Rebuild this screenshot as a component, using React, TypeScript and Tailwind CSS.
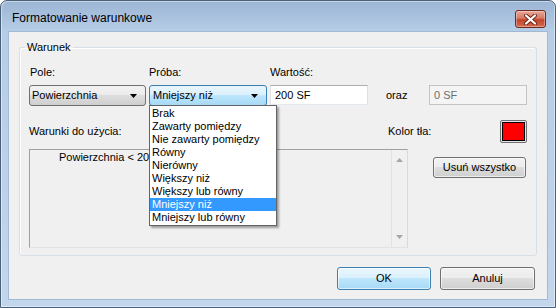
import React from "react";

const Arrow = ({ color = "#000" }: { color?: string }) => (
  <svg width="7" height="4" viewBox="0 0 7 4" className="block">
    <path d="M0 0H7L3.5 4Z" fill={color} />
  </svg>
);

const UpArrow = ({ color = "#a6a6a6" }: { color?: string }) => (
  <svg width="7" height="4" viewBox="0 0 7 4" className="block">
    <path d="M0 4H7L3.5 0Z" fill={color} />
  </svg>
);

export default function App() {
  const items = [
    "Brak",
    "Zawarty pomiędzy",
    "Nie zawarty pomiędzy",
    "Równy",
    "Nierówny",
    "Większy niż",
    "Większy lub równy",
    "Mniejszy niż",
    "Mniejszy lub równy",
  ];
  return (
    <div className="h-[308px] w-[556px] bg-white font-['Liberation_Sans',Arial,sans-serif] text-[11px] text-black">
      <div className="flex h-full flex-col rounded-t-[7px] border border-[#4b6079] bg-[linear-gradient(to_bottom,#9bb5d4,#b6cde7_30px,#c2d6ec)] shadow-[inset_1px_1px_0_rgba(255,255,255,0.45),inset_-1px_-1px_0_rgba(255,255,255,0.45)]">
        {/* Title bar */}
        <div className="flex h-[30px] items-start">
          <span className="ml-[11px] mt-[10px] text-[12px] leading-[15px]">Formatowanie warunkowe</span>
          <div className="ml-auto mr-[9px] mt-[9px] flex h-[18px] w-[31px] items-center justify-center rounded-[3px] border border-[#6e2a1f] bg-[linear-gradient(to_bottom,#e9a797,#d57a63_45%,#c0432b_55%,#d7694e)] shadow-[inset_0_0_0_1px_rgba(255,255,255,0.35)]">
            <svg width="13" height="11" viewBox="0 0 13 11" className="block">
              <path d="M2 1.5L11 9.5M11 1.5L2 9.5" stroke="#6b2418" strokeWidth="4" strokeLinecap="round" />
              <path d="M2 1.5L11 9.5M11 1.5L2 9.5" stroke="#ffffff" strokeWidth="2.2" strokeLinecap="round" />
            </svg>
          </div>
        </div>

        {/* Client area */}
        <div className="mx-[7px] mb-[7px] flex flex-1 flex-col border border-[#a3b9d3] bg-[#f0f0f0]">
          <fieldset className="mx-[10px] mt-[9px] rounded-[3px] border border-[#d5dfe5] pb-[7px] pl-[9px] pr-[9px] pt-[12px] shadow-[inset_1px_1px_0_#ffffff]">
            <legend className="-ml-[4px] px-[2px] leading-[13px]">Warunek</legend>

            {/* Row: labels + controls */}
            <div className="flex items-start">
              <div className="flex w-[117px] flex-col">
                <span className="h-[13px] pl-[1px] leading-[13px]">Pole:</span>
                <div className="mt-[6px] flex h-[21px] items-center rounded-[3px] border border-[#707070] bg-[linear-gradient(to_bottom,#f2f2f2,#ebebeb_50%,#dddddd_50%,#cfcfcf)] pl-[2px] pr-[8px]">
                  <span className="leading-[13px]">Powierzchnia</span>
                  <span className="ml-auto">
                    <Arrow />
                  </span>
                </div>
              </div>

              <div className="relative ml-[3px] flex w-[118px] flex-col">
                <span className="h-[13px] leading-[13px]">Próba:</span>
                <div className="mt-[6px] flex h-[21px] items-center rounded-[3px] border border-[#3c7fb1] bg-[linear-gradient(to_bottom,#eaf6fd,#d9f0fc_50%,#bee6fd_50%,#a7d9f5)] pl-[3px] pr-[8px]">
                  <span className="leading-[13px]">Mniejszy niż</span>
                  <span className="ml-auto">
                    <Arrow />
                  </span>
                </div>
                <div className="absolute left-0 top-[39px] z-10 w-[128px] border border-[#646464] bg-white py-[1px] shadow-[2px_2px_2px_rgba(0,0,0,0.35)]">
                  {items.map((it) => (
                    <div
                      key={it}
                      className={
                        it === "Mniejszy niż"
                          ? "h-[13px] whitespace-nowrap bg-[#3399ff] pl-[2px] leading-[13px] text-white"
                          : "h-[13px] whitespace-nowrap pl-[2px] leading-[13px]"
                      }
                    >
                      {it}
                    </div>
                  ))}
                </div>
              </div>

              <div className="ml-[3px] flex w-[98px] flex-col">
                <span className="h-[13px] leading-[13px]">Wartość:</span>
                <div className="mt-[6px] flex h-[20px] items-center border border-[#abadb3] border-b-[#e3e9ef] border-l-[#e2e3ea] border-r-[#dbdfe6] bg-white pl-[4px]">
                  <span className="leading-[13px]">200 SF</span>
                </div>
              </div>

              <span className="ml-[18px] mt-[19px] h-[21px] leading-[21px]">oraz</span>

              <div className="ml-auto mt-[19px] flex h-[20px] w-[98px] items-center border border-[#c4c4c4] bg-[#f4f4f4] pl-[4px]">
                <span className="leading-[13px] text-[#6d6d6d]">0 SF</span>
              </div>
            </div>

            {/* Row: Warunki do użycia + Kolor tła */}
            <div className="mt-[14px] flex h-[23px] items-center">
              <span className="w-[359px] leading-[13px]">Warunki do użycia:</span>
              <span className="leading-[13px]">Kolor tła:</span>
              <div className="ml-auto h-[23px] w-[27px] rounded-[2px] border border-[#707070] bg-[#e6e6e6] p-[1px]">
                <div className="h-full w-full border border-black bg-[#ff0000]" />
              </div>
            </div>

            {/* Row: listbox + Usuń */}
            <div className="mt-[6px] flex items-start">
              <div className="flex h-[99px] w-[379px] border border-[#a0a0a0] border-b-[#e3e3e3] border-r-[#dadada] bg-[#f0f0f0]">
                <div className="flex-1 pl-[29px] pt-[1px] leading-[13px]">Powierzchnia &lt; 200 SF</div>
                <div className="flex w-[16px] flex-col items-center justify-between border-l border-[#e2e2e2] pb-[8px] pt-[8px]">
                  <UpArrow />
                  <Arrow color="#a6a6a6" />
                </div>
              </div>
              <div className="ml-auto mr-[1px] mt-[8px] flex h-[21px] w-[93px] items-center justify-center rounded-[3px] border border-[#707070] bg-[linear-gradient(to_bottom,#f2f2f2,#ebebeb_50%,#dddddd_50%,#cfcfcf)] shadow-[inset_0_0_0_1px_rgba(255,255,255,0.6)]">
                <span className="leading-[13px]">Usuń wszystko</span>
              </div>
            </div>
          </fieldset>

          {/* Bottom buttons */}
          <div className="mt-[11px] flex justify-end gap-[9px] pr-[12px]">
            <div className="flex h-[23px] w-[94px] items-center justify-center rounded-[3px] border border-[#3c7fb1] bg-[linear-gradient(to_bottom,#eaf6fd,#d9f0fc_50%,#bee6fd_50%,#a7d9f5)] shadow-[inset_0_0_0_1px_rgba(255,255,255,0.6)]">
              <span className="leading-[13px]">OK</span>
            </div>
            <div className="flex h-[23px] w-[95px] items-center justify-center rounded-[3px] border border-[#707070] bg-[linear-gradient(to_bottom,#f2f2f2,#ebebeb_50%,#dddddd_50%,#cfcfcf)] shadow-[inset_0_0_0_1px_rgba(255,255,255,0.6)]">
              <span className="leading-[13px]">Anuluj</span>
            </div>
          </div>
        </div>
      </div>
    </div>
  );
}
